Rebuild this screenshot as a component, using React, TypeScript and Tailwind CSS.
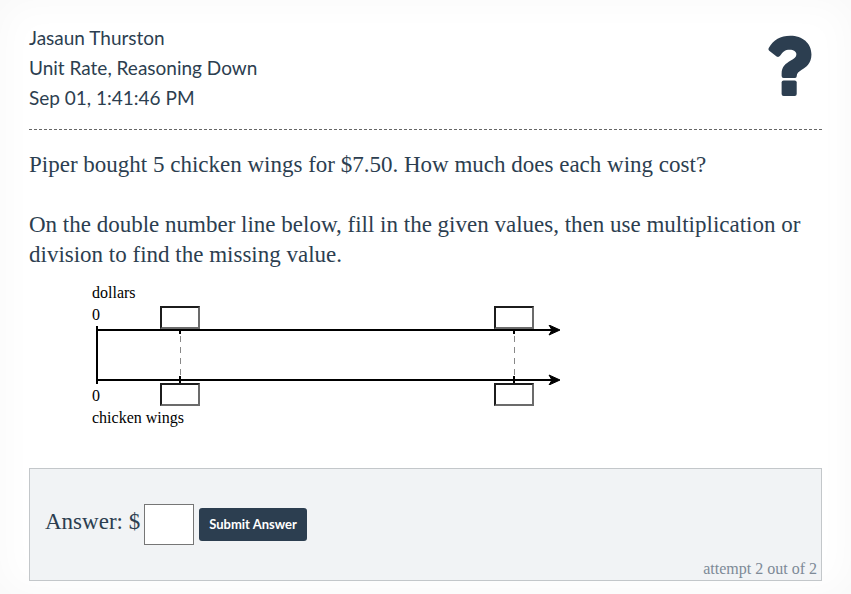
import { useState } from 'react'

const TICKS = [
  { id: 'unit', label: 'first mark', x: 88 },
  { id: 'given', label: 'second mark', x: 422 },
]

function QuestionMark() {
  return (
    <svg viewBox="0 0 130 182" className="h-[61px] w-11" fill="currentColor" aria-hidden="true">
      <path d="M2 38C16 14 36 2 66 2C102 2 129 24 129 58C129 84 113 96 100 104C91 110 85 114 85 123Q85 128 80 128H46Q40 128 40 122V115C40 94 53 85 66 77C78 70 84 66 84 58C84 49 76 44 64 44C50 44 44 50 36 61Q31 68 25 64L3 47Q-1 44 2 38Z" />
      <rect x="40" y="136" width="45" height="46" rx="6" />
    </svg>
  )
}

function NumberLines() {
  return (
    <svg width="470" height="60" viewBox="0 0 470 60" fill="none" stroke="black" className="block" aria-hidden="true">
      <path d="M5 1v58" strokeWidth="2" />
      {[5, 55].map((y) => (
        <g key={y}>
          <path d={`M5 ${y}h455`} strokeWidth="2" />
          <path d={`M457 ${y - 5}l11 5-11 5 3-5Z`} fill="black" strokeWidth="1" />
        </g>
      ))}
      {TICKS.map((t) => (
        <g key={t.id}>
          <path d={`M${t.x} 5v4M${t.x} 51v8`} strokeWidth="2" />
          <path d={`M${t.x + 0.5} 11v40`} stroke="#888" strokeDasharray="6 5" />
        </g>
      ))}
    </svg>
  )
}

function MarkInputs({ unit, className }: { unit: string; className: string }) {
  return (
    <>
      {TICKS.map((t) => (
        <input
          key={t.id}
          type="text"
          aria-label={`${unit}, ${t.label}`}
          className={`absolute h-[23px] w-10 -translate-x-1/2 border-2 border-t-[#1c1c1c] border-r-[#6b6b6b] border-b-[#6b6b6b] border-l-[#1c1c1c] bg-white text-center text-sm ${className}`}
          style={{ left: t.x }}
        />
      ))}
    </>
  )
}

export default function App() {
  const [answer, setAnswer] = useState('')

  return (
    <main className="min-h-screen bg-white px-[29px] pt-[23px] pb-[13px] text-[#2c3e50] shadow-[inset_0_0_40px_rgba(0,0,0,0.03)] font-['Georgia','Liberation_Serif',serif]">
      <header className="flex items-start justify-between border-b border-dashed border-[#666] pb-4 font-['Lato','Open_Sans',sans-serif] text-[19px] leading-[30px]">
        <div>
          <p>Jasaun Thurston</p>
          <p>Unit Rate, Reasoning Down</p>
          <p>Sep 01, 1:41:46 PM</p>
        </div>
        <button type="button" aria-label="Help" className="mt-3 mr-[10px]">
          <QuestionMark />
        </button>
      </header>

      <section className="mt-5 flex flex-col gap-[30px] text-[23px] leading-[30px]">
        <p>Piper bought 5 chicken wings for $7.50. How much does each wing cost?</p>
        <p>
          On the double number line below, fill in the given values, then use multiplication or division to find the
          missing value.
        </p>
      </section>

      {/* double number line */}
      <section className="mt-3 ml-[63px] text-base text-black">
        <p className="leading-[22px]">dollars</p>
        <div className="relative w-[470px]">
          <p className="leading-[21px]">0</p>
          <NumberLines />
          <p className="leading-[22px]">0</p>
          <MarkInputs unit="dollars" className="top-0.5" />
          <MarkInputs unit="chicken wings" className="bottom-px" />
        </div>
        <p className="leading-[22px]">chicken wings</p>
      </section>

      <form
        className="mt-[39px] border border-[#c3c7ca] bg-[#f1f3f5] pt-[35px]"
        onSubmit={(e) => e.preventDefault()}
      >
        <div className="flex items-center pl-[15px]">
          <label htmlFor="answer" className="mr-1 pb-1.5 text-[23px] leading-[30px]">
            Answer: $
          </label>
          <input
            id="answer"
            type="text"
            value={answer}
            onChange={(e) => setAnswer(e.target.value)}
            className="mr-[5px] h-[41px] w-[50px] border border-[#767676] bg-white px-1 text-xl"
          />
          <button
            type="submit"
            className="h-[33px] rounded-[3px] bg-[#2c3e50] px-2.5 font-['Lato',sans-serif] text-[13px] font-bold text-white"
          >
            Submit Answer
          </button>
        </div>
        <p className="mt-3 pr-1 text-right text-base leading-[23px] text-[#7d8a97]">attempt 2 out of 2</p>
      </form>
    </main>
  )
}
